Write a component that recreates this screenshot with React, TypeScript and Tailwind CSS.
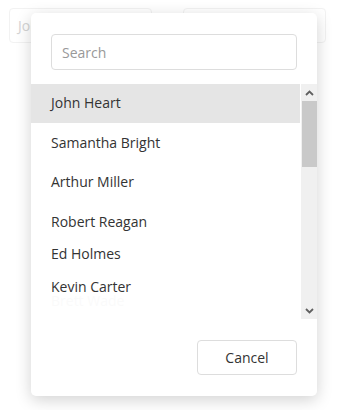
const people: { name: string; h: string }[] = [
  { name: "John Heart", h: "h-[39px]" },
  { name: "Samantha Bright", h: "h-[40px]" },
  { name: "Arthur Miller", h: "h-[39px]" },
  { name: "Robert Reagan", h: "h-[40px]" },
  { name: "Ed Holmes", h: "h-[25px]" },
  { name: "Kevin Carter", h: "h-[40px]" },
];

function ChevronUp() {
  return (
    <svg width="9" height="6" viewBox="0 0 9 6" className="fill-none stroke-[#606060]" strokeWidth="1.8">
      <path d="M1 5 L4.5 1.5 L8 5" />
    </svg>
  );
}

function ChevronDown() {
  return (
    <svg width="9" height="6" viewBox="0 0 9 6" className="fill-none stroke-[#606060]" strokeWidth="1.8">
      <path d="M1 1 L4.5 4.5 L8 1" />
    </svg>
  );
}

export default function App() {
  return (
    <div
      className="relative w-[347px] h-[410px] bg-white overflow-hidden text-[14px] text-[#333]"
      style={{ fontFamily: '"Segoe UI", "Open Sans", "Noto Sans", sans-serif' }}
    >
      {/* faded form behind the popup */}
      <div className="flex gap-[31px] pt-[8px] pl-[9px]">
        <div className="w-[143px] h-[35px] border border-[#f2f2f2] rounded flex items-center px-[8px] text-[#d4d4d4]">
          John Heart
        </div>
        <div className="w-[143px] h-[35px] border border-[#f2f2f2] rounded" />
      </div>

      <div className="absolute left-[31px] top-[13px] w-[286px] h-[383px] bg-white rounded-[5px] shadow-[0_4px_16px_rgba(0,0,0,0.18)] flex flex-col">
        <div className="px-[20px] pt-[21px]">
          <div className="h-[36px] border border-[#dddddd] rounded-[4px] flex items-center px-[10px] text-[#999]">
            Search
          </div>
        </div>

        <div className="mt-[14px] flex h-[235px]">
          <div className="flex-1 relative overflow-hidden mr-px">
            {people.map((p, i) => (
              <div
                key={p.name}
                className={`${p.h} flex items-center pl-[20px] pb-[2px] ${i === 0 ? "bg-[#e5e5e5]" : ""}`}
              >
                {p.name}
              </div>
            ))}
            <div className="absolute left-[20px] top-[206px] text-[#333] opacity-[0.02]">Brett Wade</div>
          </div>
          <div className="w-[16px] bg-[#f0f0f0] flex flex-col items-center">
            <div className="h-[17px] flex items-center justify-center">
              <ChevronUp />
            </div>
            <div className="w-[15px] h-[66px] bg-[#c9c9c9]" />
            <div className="flex-1" />
            <div className="h-[17px] flex items-center justify-center">
              <ChevronDown />
            </div>
          </div>
        </div>

        <div className="flex justify-end px-[20px] pt-[21px]">
          <button
            type="button"
            className="w-[100px] h-[35px] border border-[#dddddd] rounded-[4px] bg-white text-[#333]"
          >
            Cancel
          </button>
        </div>
      </div>
    </div>
  );
}
